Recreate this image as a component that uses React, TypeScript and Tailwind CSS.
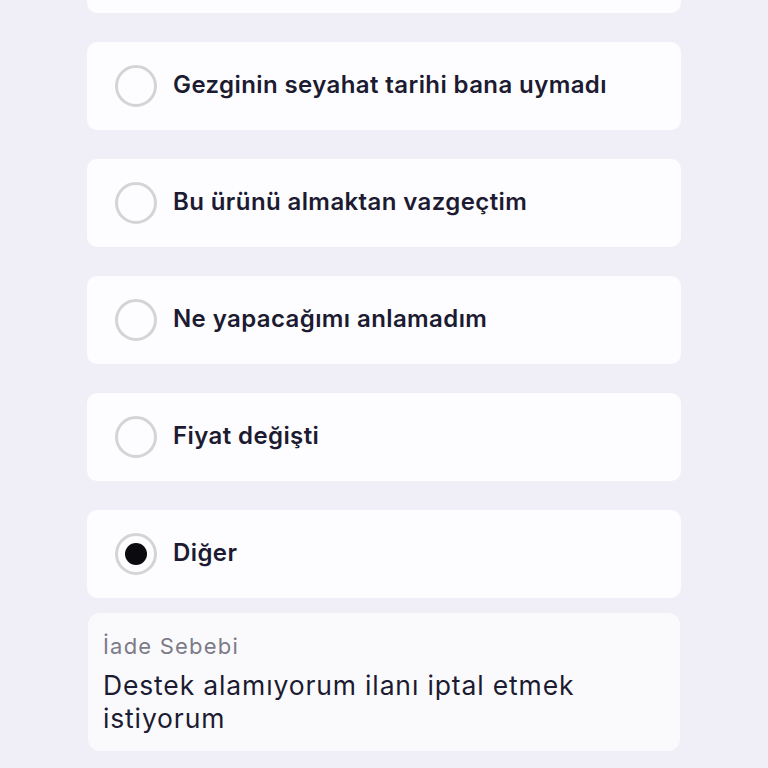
import React from "react";

const options = [
  { label: "", selected: false, hidden: true },
  { label: "Gezginin seyahat tarihi bana uymadı", selected: false },
  { label: "Bu ürünü almaktan vazgeçtim", selected: false },
  { label: "Ne yapacağımı anlamadım", selected: false },
  { label: "Fiyat değişti", selected: false },
  { label: "Diğer", selected: true },
];

function Radio({ selected }: { selected: boolean }) {
  return (
    <div className="w-[42px] h-[42px] rounded-full border-[3px] border-[#d4d4d6] flex items-center justify-center shrink-0">
      {selected && <div className="w-[22px] h-[22px] rounded-full bg-[#0a0a0f]" />}
    </div>
  );
}

export default function App() {
  return (
    <div
      className="w-[768px] h-[768px] overflow-hidden bg-[#f0eff7]"
      style={{ fontFamily: "Inter, 'Noto Sans', sans-serif" }}
    >
      <div className="flex flex-col gap-[29px] pl-[87px] w-[681px] mt-[-75px]">
        {options.map((o, i) => (
          <div
            key={i}
            className="h-[88px] rounded-[10px] bg-[#fdfdff] flex items-center gap-[16px] pl-[28px]"
          >
            {!o.hidden && (
              <>
                <Radio selected={o.selected} />
                <span className="text-[24px] leading-[30px] font-semibold text-[#1c1b31] tracking-[0.4px] -translate-y-[1px]">
                  {o.label}
                </span>
              </>
            )}
          </div>
        ))}
      </div>
      <div className="ml-[88px] w-[592px] mt-[15px] h-[138px] rounded-[12px] bg-[#fafafd] pl-[15px] pt-[18px]">
        <div className="text-[22px] leading-[30px] text-[#7c7b87] tracking-[1.2px]">İade Sebebi</div>
        <div className="text-[26.5px] leading-[33px] text-[#1c1b31] mt-[8px] w-[520px] tracking-[0.85px]">
          Destek alamıyorum ilanı iptal etmek istiyorum
        </div>
      </div>
    </div>
  );
}
